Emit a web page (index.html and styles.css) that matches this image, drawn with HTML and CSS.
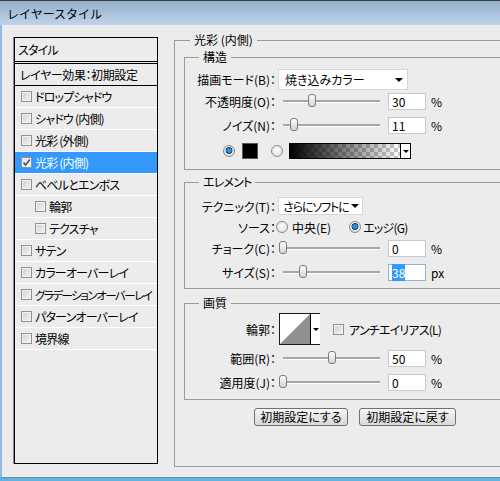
FILE: index.html
```html
<!DOCTYPE html>
<html lang="ja">
<head>
<meta charset="utf-8">
<title>レイヤースタイル</title>
<link rel="stylesheet" href="styles.css">
</head>
<body>
<div class="window">
  <div class="titlebar">レイヤースタイル</div>
  <div class="main">
    <div class="list">
      <div class="li head">スタイル</div>
      <div class="li head2">レイヤー効果：初期設定</div>
      <div class="li"><span class="cb"></span>ドロップシャドウ</div>
      <div class="li"><span class="cb"></span>シャドウ (内側)</div>
      <div class="li"><span class="cb"></span>光彩 (外側)</div>
      <div class="li sel"><span class="cb"><svg width="9" height="9" viewBox="0 0 9 9"><path d="M1.5 4.5 L3.6 7 L7.8 1.5" fill="none" stroke="#34507e" stroke-width="1.5"/></svg></span>光彩 (内側)</div>
      <div class="li"><span class="cb"></span>ベベルとエンボス</div>
      <div class="li sub"><span class="cb"></span>輪郭</div>
      <div class="li sub"><span class="cb"></span>テクスチャ</div>
      <div class="li"><span class="cb"></span>サテン</div>
      <div class="li"><span class="cb"></span>カラーオーバーレイ</div>
      <div class="li"><span class="cb"></span><span class="tight">グラデーションオーバーレイ</span></div>
      <div class="li"><span class="cb"></span>パターンオーバーレイ</div>
      <div class="li"><span class="cb"></span>境界線</div>
    </div>

    <fieldset class="outer">
      <legend>光彩 (内側)</legend>

      <fieldset class="sub-group g-struct">
        <legend>構造</legend>
        <div class="row r-mode">
          <span class="lbl">描画モード(B)：</span>
          <div class="select w-mode"><span class="sel-text">焼き込みカラー</span><i class="arrow"></i></div>
        </div>
        <div class="row r-op">
          <span class="lbl">不透明度(O)：</span>
          <div class="slider"><div class="track"><div class="thumb" style="left:30%"></div></div></div>
          <div class="num">30</div><span class="unit">%</span>
        </div>
        <div class="row r-noise">
          <span class="lbl">ノイズ(N)：</span>
          <div class="slider"><div class="track"><div class="thumb" style="left:11%"></div></div></div>
          <div class="num">11</div><span class="unit">%</span>
        </div>
        <div class="row r-color">
          <span class="radio on"></span>
          <span class="swatch"></span>
          <span class="radio r2"></span>
          <div class="grad"><div class="g"></div><div class="dd"><i class="arrow sm"></i></div></div>
        </div>
      </fieldset>

      <fieldset class="sub-group g-elem">
        <legend class="kana">エレメント</legend>
        <div class="row r-tech">
          <span class="lbl">テクニック(T)：</span>
          <div class="select w-tech"><span class="sel-text kana">さらにソフトに</span><i class="arrow"></i></div>
        </div>
        <div class="row r-src">
          <span class="lbl">ソース：</span>
          <span class="radio"></span><span class="rtext">中央(E)</span>
          <span class="radio on r-edge"></span><span class="rtext t-edge kana">エッジ(G)</span>
        </div>
        <div class="row r-slider">
          <span class="lbl">チョーク(C)：</span>
          <div class="slider"><div class="track"><div class="thumb" style="left:0%"></div></div></div>
          <div class="num">0</div><span class="unit">%</span>
        </div>
        <div class="row r-slider">
          <span class="lbl">サイズ(S)：</span>
          <div class="slider"><div class="track"><div class="thumb" style="left:20.6%"></div></div></div>
          <div class="num focus"><span class="hl">38</span></div><span class="unit">px</span>
        </div>
      </fieldset>

      <fieldset class="sub-group g-quality">
        <legend>画質</legend>
        <div class="row r-contour">
          <span class="lbl">輪郭：</span>
          <div class="contour">
            <svg width="30" height="30" viewBox="0 0 30 30"><rect width="30" height="30" fill="#fff"/><path d="M0 30 L30 0 L30 30 Z" fill="#8f8f8f"/></svg>
            <div class="dd"><i class="arrow sm"></i></div>
          </div>
          <span class="cb aa"></span><span class="aa-text kana">アンチエイリアス(L)</span>
        </div>
        <div class="row r-slider r-range">
          <span class="lbl">範囲(R)：</span>
          <div class="slider"><div class="track"><div class="thumb" style="left:50%"></div></div></div>
          <div class="num">50</div><span class="unit">%</span>
        </div>
        <div class="row r-slider">
          <span class="lbl">適用度(J)：</span>
          <div class="slider"><div class="track"><div class="thumb" style="left:0%"></div></div></div>
          <div class="num">0</div><span class="unit">%</span>
        </div>
      </fieldset>

      <div class="buttons">
        <div class="btn b1">初期設定にする</div>
        <div class="btn b2">初期設定に戻す</div>
      </div>
    </fieldset>
  </div>
  <div class="frame-bottom"></div>
</div>
</body>
</html>
```

FILE: styles.css
```css
* { box-sizing: border-box; }
html, body { margin: 0; padding: 0; overflow: hidden; background: #ececec; }
body {
  font-family: "Noto Sans CJK JP", "Noto Sans", sans-serif;
  font-size: 12px;
  color: #000;
  font-feature-settings: "palt";
}
.window { width: 560px; }

.titlebar {
  height: 25px;
  border-top: 1px solid #3e3e3e;
  background: linear-gradient(#95afca, #bdd3eb);
  padding-left: 7px;
  line-height: 25px;
  font-size: 12px;
  font-feature-settings: normal;
}

.main {
  height: 453px;
  display: flex;
  align-items: flex-start;
  border-left: 2px solid #8fbbe4;
  border-bottom: 1px solid #7d8893;
  padding-left: 12px;
}
.frame-bottom { height: 4px; background: #5db3e4; }

.kana { letter-spacing: -0.8px; }

/* left style list */
.list {
  margin-top: 12px;
  width: 144px;
  height: 427px;
  border: 1px solid #000;
  box-shadow: -1px 0 0 #8a8a8a;
  flex: none;
  overflow: hidden;
}
.li {
  height: 22px;
  border-bottom: 1px solid #fff;
  display: flex;
  align-items: center;
  padding-left: 6px;
  line-height: 16px;
  white-space: nowrap;
  letter-spacing: -0.8px;
}
.tight { font-size: 11.5px; letter-spacing: -1.5px; }
.li.head { height: 26px; border-bottom: 3px double #000; padding-left: 3px; }
.li.head2 { height: 22px; border-bottom: 1px solid #000; padding-left: 5px; letter-spacing: -0.4px; }
.li.sel { background: #3399ff; color: #fff; }
.li.sub { padding-left: 20px; }

.cb {
  width: 11px;
  height: 11px;
  flex: none;
  margin-right: 3px;
  border: 1px solid #919191;
  background: linear-gradient(135deg, #cfcfcf, #f6f6f6);
  box-shadow: inset 0 0 0 1px #f2f2f2;
  display: flex;
  align-items: center;
  justify-content: center;
}
.li.sel .cb { background: linear-gradient(135deg, #e2e2e2, #fbfbfb); }

/* right panel groups */
fieldset {
  margin: 0;
  padding: 0;
  border: 1px solid #9b9b9b;
  min-inline-size: 0;
}
legend { padding: 0 4px; line-height: 16px; }

.outer {
  margin-top: 7px;
  margin-left: 16px;
  width: 380px;
  height: 435px;
  padding: 1px 0 0 9px;
  flex: none;
}
.outer > legend { margin-left: 6px; }

.sub-group { width: 360px; }
.sub-group > legend { margin-left: 14px; }
.g-struct { padding: 4px 0 9px 0; }
.g-elem { margin-top: 4px; padding: 7px 0 4px 0; }
.g-quality { margin-top: 6px; padding: 2px 0 5px 0; }

.row { display: flex; align-items: center; white-space: nowrap; }
.lbl { width: 91px; text-align: right; flex: none; }

.r-mode { height: 21px; }
.r-op { height: 22px; }
.r-noise { height: 22px; margin-top: 2px; }
.r-color { height: 18px; margin-top: 6px; padding-left: 38px; }
.r-tech { height: 18px; }
.r-src { height: 18px; margin-top: 3px; }
.r-slider { height: 24px; }
.r-contour { height: 32px; }
.r-range { margin-top: 1px; }

.select {
  margin-left: 2px;
  background: #fff;
  border: 1px solid #d6d6d6;
  display: flex;
  align-items: center;
  overflow: hidden;
}
.sel-text { overflow: hidden; }
.w-mode { width: 130px; height: 21px; padding-left: 6px; }
.w-tech { width: 85px; height: 18px; padding-left: 4px; }
.w-tech .sel-text { letter-spacing: -1.1px; }
.arrow {
  display: block;
  flex: none;
  width: 0;
  height: 0;
  border-left: 4px solid transparent;
  border-right: 4px solid transparent;
  border-top: 4px solid #000;
  margin-left: auto;
  margin-right: 4px;
}
.w-tech .arrow { margin-right: 3px; margin-left: 2px; }
.arrow.sm {
  margin: 0;
  border-left-width: 3px;
  border-right-width: 3px;
  border-top-width: 3px;
}

.slider {
  width: 107px;
  height: 16px;
  margin-left: 2px;
  padding: 0 5px;
  display: flex;
  align-items: center;
  flex: none;
}
.track {
  position: relative;
  width: 97px;
  height: 2px;
  background: #a7a7a7;
  box-shadow: 0 1px 0 #fff;
}
.thumb {
  position: absolute;
  top: -6px;
  width: 8px;
  height: 13px;
  margin-left: -4px;
  border: 1px solid #7b7b7b;
  border-radius: 3px;
  background: linear-gradient(#fdfdfd, #d3d3d3);
}

.num {
  width: 38px;
  height: 17px;
  margin-left: 3px;
  border: 1px solid #cacaca;
  background: #fff;
  padding-left: 3px;
  line-height: 15px;
  flex: none;
}
.num.focus { border-color: #8fb4dc; }
.hl { background: #3399ff; color: #fff; }
.unit { margin-left: 5px; }

.radio {
  width: 12px;
  height: 12px;
  flex: none;
  border-radius: 50%;
  border: 1px solid #8a8a8a;
  background: radial-gradient(circle at 50% 40%, #ffffff, #d4d4d4);
}
.radio.on {
  background: radial-gradient(circle at 50% 45%, #3fa9ea 0, #1a72b8 2.6px, #0f4f86 3.2px, #f4f4f4 3.8px, #cfcfcf 6px);
}
.swatch {
  width: 16px;
  height: 16px;
  margin-left: 7px;
  background: #000;
  border: 1px solid #555;
  flex: none;
}
.radio.r2 { margin-left: 13px; }
.grad {
  width: 122px;
  height: 16px;
  margin-left: 6px;
  border: 1px solid #000;
  display: flex;
  flex: none;
}
.grad .g {
  flex: 1;
  background:
    linear-gradient(to right, #000, rgba(0, 0, 0, 0)),
    repeating-conic-gradient(#c9c9c9 0 25%, #ffffff 0 50%) 0 0 / 8px 8px;
}
.dd {
  width: 10px;
  border-left: 1px solid #000;
  background: #fff;
  display: flex;
  align-items: center;
  justify-content: center;
  flex: none;
}

.rtext { margin-left: 4px; }
.r-edge { margin-left: 18px; }
.t-edge { margin-left: 2px; }

.contour {
  width: 41px;
  height: 32px;
  margin-left: 3px;
  border: 1px solid #1a1a1a;
  display: flex;
  flex: none;
}
.contour svg { display: block; flex: none; }
.cb.aa { margin-left: 13px; margin-right: 0; }
.aa-text { margin-left: 5px; }

.buttons {
  display: flex;
  gap: 11px;
  margin-top: 8px;
  padding-left: 70px;
}
.btn {
  height: 18px;
  border: 1px solid #707070;
  border-radius: 3px;
  background: linear-gradient(#f8f8f8, #e6e6e6 50%, #d9d9d9);
  display: flex;
  align-items: center;
  justify-content: center;
  line-height: 16px;
}
.b1 { width: 94px; }
.b2 { width: 97px; }
```
